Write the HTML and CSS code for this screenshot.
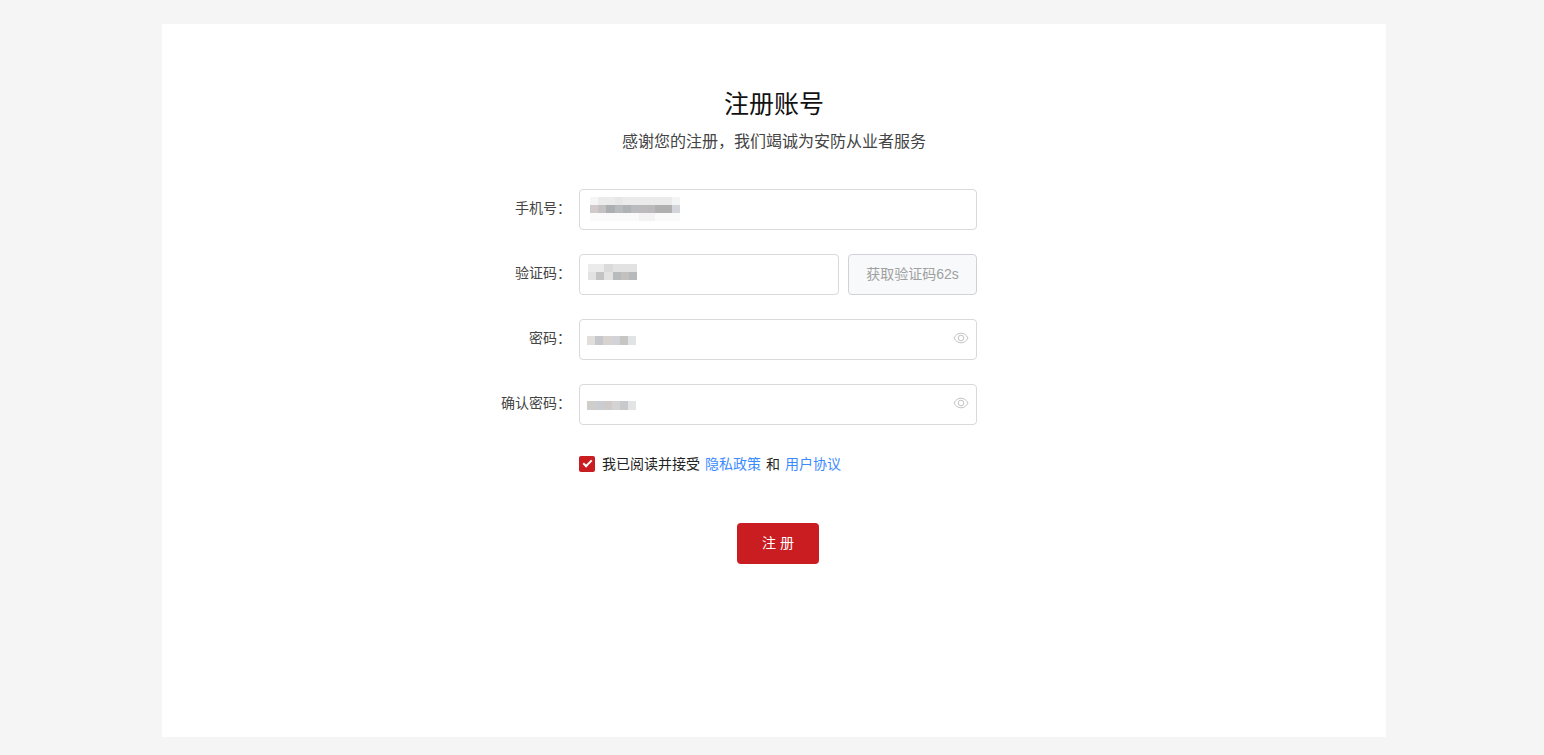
FILE: index.html
```
<!doctype html>
<html lang="zh-CN">
<head>
    <meta charset="UTF-8">
    <meta name="viewport" content="width=device-width, initial-scale=1.0">
    <title>注册账号</title>
    <link rel="stylesheet" href="styles.css">
</head>
<body>
<main class="panel">
    <h1 class="title">注册账号</h1>
    <p class="subtitle">感谢您的注册，我们竭诚为安防从业者服务</p>
    <form class="form">
        <div class="row">
            <label class="label" for="phone">手机号：</label>
            <div class="field">
                <input class="input" type="tel" id="phone">
                <svg class="mask mask-phone" viewBox="0 0 11 3" preserveAspectRatio="none" shape-rendering="crispEdges" aria-hidden="true">
                    <rect width="11" height="1" fill="#ebebeb"/>
                    <rect width="1" height="1" fill="#f5f5f6"/>
                    <rect x="3" width="1" height="1" fill="#e6e8e8"/>
                    <rect x="10" width="1" height="1" fill="#f2f4f6"/>
                    <rect y="1" width="1" height="1" fill="#d0caca"/>
                    <rect x="1" y="1" width="1" height="1" fill="#c3c1c1"/>
                    <rect x="2" y="1" width="1" height="1" fill="#adaeaf"/>
                    <rect x="3" y="1" width="1" height="1" fill="#b8bbbd"/>
                    <rect x="4" y="1" width="1" height="1" fill="#afb3b5"/>
                    <rect x="5" y="1" width="1" height="1" fill="#b9bbbf"/>
                    <rect x="6" y="1" width="1" height="1" fill="#bdbabb"/>
                    <rect x="7" y="1" width="1" height="1" fill="#bababc"/>
                    <rect x="8" y="1" width="2" height="1" fill="#b0b0b0"/>
                    <rect x="10" y="1" width="1" height="1" fill="#d3d5da"/>
                    <rect y="2" width="11" height="1" fill="#fafafa"/>
                    <rect x="6" y="2" width="2" height="1" fill="#f3f3f3"/>
                </svg>
            </div>
        </div>
        <div class="row">
            <label class="label" for="code">验证码：</label>
            <div class="field">
                <input class="input" type="text" id="code">
                <svg class="mask mask-code" viewBox="0 0 6 2" preserveAspectRatio="none" shape-rendering="crispEdges" aria-hidden="true">
                    <rect width="6" height="2" fill="#e2e2e2"/>
                    <rect width="2" height="1" fill="#ebebeb"/>
                    <rect x="2" width="1" height="1" fill="#dadada"/>
                    <rect x="1" y="1" width="1" height="1" fill="#c3c3c3"/>
                    <rect x="3" y="1" width="1" height="1" fill="#b9babc"/>
                    <rect x="4" y="1" width="1" height="1" fill="#c3c1bf"/>
                    <rect x="5" y="1" width="1" height="1" fill="#b8b9bb"/>
                </svg>
            </div>
            <button class="code-btn" type="button" disabled>获取验证码62s</button>
        </div>
        <div class="row">
            <label class="label" for="pwd">密码：</label>
            <div class="field">
                <input class="input" type="password" id="pwd">
                <svg class="mask mask-pwd" viewBox="0 0 6 1" preserveAspectRatio="none" shape-rendering="crispEdges" aria-hidden="true">
                    <rect width="1" height="1" fill="#e0dfdb"/>
                    <rect x="1" width="1" height="1" fill="#c5c7cb"/>
                    <rect x="2" width="1" height="1" fill="#d8d3d0"/>
                    <rect x="3" width="1" height="1" fill="#d1d3d6"/>
                    <rect x="4" width="1" height="1" fill="#c7c6c5"/>
                    <rect x="5" width="1" height="1" fill="#e0e4e5"/>
                </svg>
                <button class="eye" type="button" aria-label="显示密码">
                    <svg viewBox="0 0 16 12" width="16" height="12">
                        <path d="M1 6C2.8 2.7 5.2 1.2 8 1.2S13.2 2.7 15 6C13.2 9.3 10.8 10.8 8 10.8S2.8 9.3 1 6Z"/>
                        <circle cx="8" cy="6" r="2.8"/>
                    </svg>
                </button>
            </div>
        </div>
        <div class="row">
            <label class="label" for="pwd2">确认密码：</label>
            <div class="field">
                <input class="input" type="password" id="pwd2">
                <svg class="mask mask-pwd" viewBox="0 0 6 1" preserveAspectRatio="none" shape-rendering="crispEdges" aria-hidden="true">
                    <rect width="1" height="1" fill="#d0cecb"/>
                    <rect x="1" width="1" height="1" fill="#cacdd2"/>
                    <rect x="2" width="1" height="1" fill="#d0cbca"/>
                    <rect x="3" width="1" height="1" fill="#d3d3d3"/>
                    <rect x="4" width="1" height="1" fill="#c8c9cd"/>
                    <rect x="5" width="1" height="1" fill="#e3e5e5"/>
                </svg>
                <button class="eye" type="button" aria-label="显示密码">
                    <svg viewBox="0 0 16 12" width="16" height="12">
                        <path d="M1 6C2.8 2.7 5.2 1.2 8 1.2S13.2 2.7 15 6C13.2 9.3 10.8 10.8 8 10.8S2.8 9.3 1 6Z"/>
                        <circle cx="8" cy="6" r="2.8"/>
                    </svg>
                </button>
            </div>
        </div>
        <div class="agree">
            <input class="check" type="checkbox" id="agree" checked>
            <label for="agree">我已阅读并接受</label>
            <a href="#">隐私政策</a>
            <span>和</span>
            <a href="#">用户协议</a>
        </div>
        <div class="actions">
            <button class="submit" type="submit">注 册</button>
        </div>
    </form>
</main>
</body>
</html>
```
FILE: styles.css
```
*{margin: 0;padding: 0;box-sizing: border-box}
body{
    padding: 24px 0 18px 4px;
    background: #f5f5f5;
    color: #222;
    font-family: "Liberation Sans", "Noto Sans CJK SC", sans-serif;
    font-size: 14px;
}
input,button{font-family: inherit;font-size: inherit}
.panel{
    max-width: 1224px;
    min-height: calc(100vh - 42px);
    margin: 0 auto;
    padding: 62px 24px 24px;
    background: #fff;
}
.title{
    font-size: 25px;
    font-weight: 400;
    line-height: 36px;
    text-align: center;
    color: #111;
}
.subtitle{
    margin-top: 8px;
    font-size: 16px;
    line-height: 24px;
    text-align: center;
    color: #444;
}

/* the right padding balances the label column */
.form{
    max-width: 612px;
    margin: 35px auto 0;
    padding-right: 103px;
}
.row{display: flex;margin-bottom: 24px}
.label{
    flex: none;
    width: 111px;
    padding-right: 8px;
    line-height: 38px;
    text-align: right;
    color: #444;
}
.field{position: relative;flex: 1}
.input{
    display: block;
    width: 100%;
    height: 41px;
    padding: 0 12px;
    border: 1px solid #d9d9d9;
    border-radius: 4px;
    background: #fff;
    outline: none;
}
.code-btn{
    width: 129px;
    height: 41px;
    margin-left: 9px;
    padding-bottom: 4px;
    border: 1px solid #d0d2d5;
    border-radius: 4px;
    background: #f7f9fb;
    color: #a0a0a0;
}

/* mosaic over the private values */
.mask{position: absolute;pointer-events: none}
.mask-phone{left: 11px;top: 8px;width: 90px;height: 24px}
.mask-code{left: 9px;top: 10px;width: 49px;height: 16px}
.mask-pwd{left: 8px;top: 17px;width: 49px;height: 9px}

.eye{
    position: absolute;
    top: 0;
    right: 8px;
    height: 38px;
    border: 0;
    background: none;
    cursor: pointer;
}
.eye svg{display: block;fill: none;stroke: #c4c4c4;stroke-width: 1}

.agree{
    display: flex;
    align-items: center;
    gap: 5px;
    margin: 27px 0 47px 111px;
    line-height: 24px;
}
.agree a{color: #3a8bff;text-decoration: none}
.check{
    display: flex;
    justify-content: center;
    width: 16px;
    height: 16px;
    margin-right: 2px;
    border-radius: 2px;
    background: #c91d22;
    appearance: none;
}
.check:checked::after{
    content: "";
    box-sizing: border-box;
    width: 5px;
    height: 9px;
    margin-top: 2px;
    border: solid #fff;
    border-width: 0 2px 2px 0;
    transform: rotate(45deg);
}
.actions{display: flex;justify-content: center;padding-left: 111px}
.submit{
    width: 82px;
    height: 41px;
    padding-bottom: 4px;
    border: 0;
    border-radius: 4px;
    background: #c91d22;
    color: #fff;
    cursor: pointer;
}
```
